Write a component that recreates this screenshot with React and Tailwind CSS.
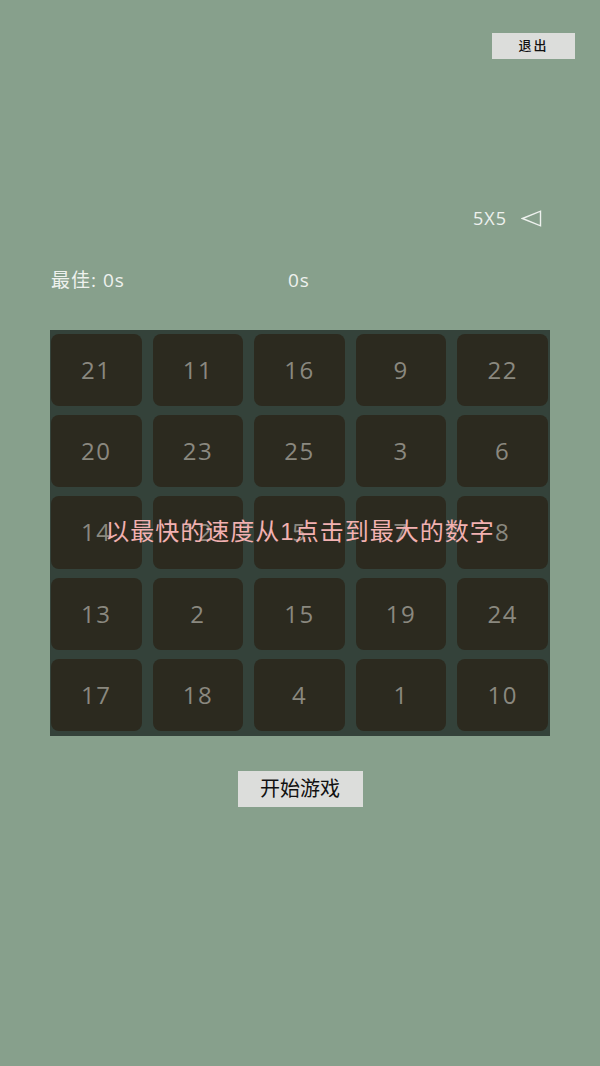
const numbers = [
  [21, 11, 16, 9, 22],
  [20, 23, 25, 3, 6],
  [14, 12, 5, 7, 8],
  [13, 2, 15, 19, 24],
  [17, 18, 4, 1, 10],
];

const sans = '"Open Sans", "Noto Sans CJK SC", sans-serif';
const cjk = '"Liberation Sans", "Noto Sans CJK SC", sans-serif';

export default function App() {
  return (
    <div
      className="flex h-[1066px] w-[600px] flex-col bg-[#87a08c] text-[#eef1ee]"
      style={{ fontFamily: sans }}
    >
      <div className="flex justify-end pr-[25px] pt-[33px]">
        <button
          className="flex h-[26px] w-[83px] items-center justify-center bg-[#dcdddb] text-[13px] font-medium tracking-[2px] text-[#111]"
          style={{ fontFamily: cjk }}
        >
          退出
        </button>
      </div>

      <div className="mt-[150px] flex items-center justify-end pr-[58px]">
        <span className="text-[18px] leading-none tracking-[1px]">5X5</span>
        <svg className="ml-[14px]" width="21" height="17" viewBox="0 0 21 17" fill="none">
          <path d="M1.5 8.5 L19.5 1.2 L19.5 15.8 Z" stroke="#eef1ee" strokeWidth="1.4" strokeLinejoin="miter" />
        </svg>
      </div>

      <div className="mt-[44px] flex items-center pl-[51px] text-[19px] leading-none tracking-[1px]">
        <span className="w-[237px]">最佳: 0s</span>
        <span>0s</span>
      </div>

      <div className="relative mx-[50px] mt-[40px] h-[406px] bg-[#34423a] pb-[5px] pl-[1px] pr-[2px] pt-[4px]">
        <div className="grid h-full grid-cols-5 grid-rows-5 gap-x-[11px] gap-y-[9px]">
          {numbers.flat().map((n) => (
            <div
              key={n}
              className="flex items-center justify-center rounded-[8px] bg-[#2c2a1f] text-[24px] tracking-[1.5px] text-[#8a887f]"
            >
              {n}
            </div>
          ))}
        </div>
        <div className="pointer-events-none absolute inset-x-0 top-[190px] flex justify-center">
          <span
            className="text-[24px] leading-none tracking-[1px] text-[#f2b1b1]"
            style={{ fontFamily: cjk }}
          >
            以最快的速度从1点击到最大的数字
          </span>
        </div>
      </div>

      <div className="mt-[35px] flex justify-center">
        <button
          className="flex h-[36px] w-[125px] items-center justify-center bg-[#dcdddb] text-[20px] text-[#111]"
          style={{ fontFamily: cjk }}
        >
          开始游戏
        </button>
      </div>
    </div>
  );
}
